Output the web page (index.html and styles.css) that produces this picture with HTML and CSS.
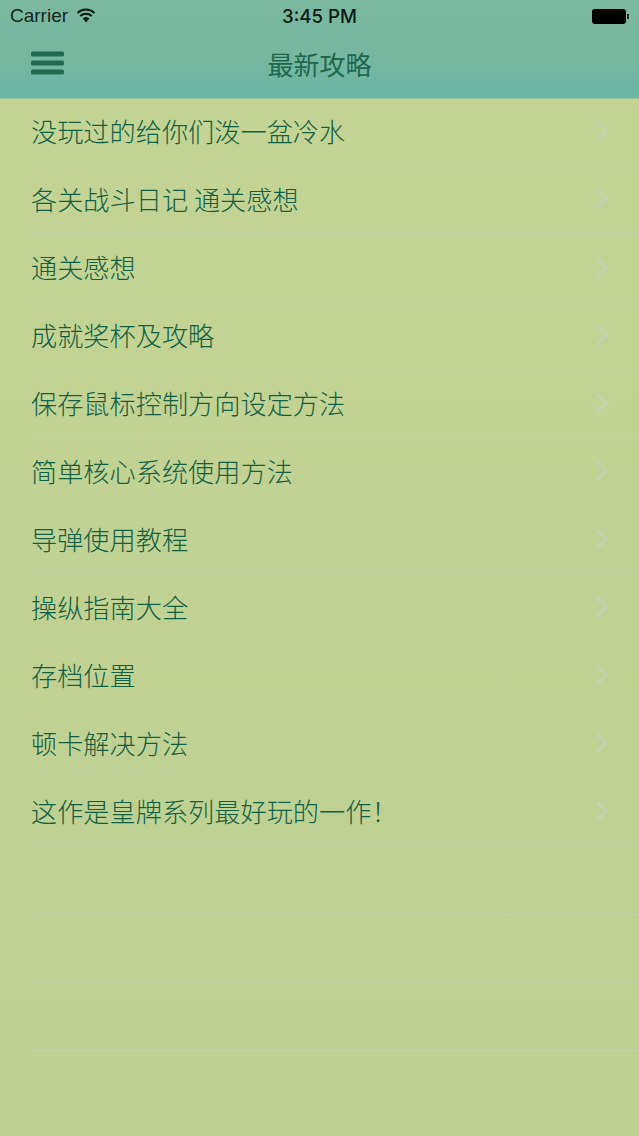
FILE: index.html
```html
<!DOCTYPE html>
<html lang="zh">
<head>
<meta charset="utf-8">
<title>最新攻略</title>
<link rel="stylesheet" href="styles.css">
</head>
<body>
<div class="app">
  <header class="top">
    <div class="status">
      <div class="status-left">
        <span>Carrier</span>
        <svg class="wifi" width="20" height="15" viewBox="0 0 20 15"><path d="M10 14.500 6.700 10.600a4.900 4.900 0 0 1 6.600 0Z" fill="#0a1a14"/><path d="M4.300 8a8.400 8.400 0 0 1 11.400 0M1.500 4.900a12.600 12.600 0 0 1 17 0" fill="none" stroke="#0a1a14" stroke-width="2"/></svg>
      </div>
      <div class="status-time">3:45 PM</div>
      <div class="status-right">
        <span class="battery"></span><span class="battery-tip"></span>
      </div>
    </div>
    <div class="nav">
      <svg class="menu" width="34" height="24" viewBox="0 0 34 24"><rect y="0.500" width="33" height="5" rx="1.500"/><rect y="9.500" width="33" height="5" rx="1.500"/><rect y="18.500" width="33" height="5" rx="1.500"/></svg>
      <h1 class="title">最新攻略</h1>
    </div>
  </header>
  <ul class="list">
    <li class="row"><span>没玩过的给你们泼一盆冷水</span><svg class="chev" width="14" height="22" viewBox="0 0 14 22"><path d="M2.500 2 11 11 2.500 20"/></svg></li>
    <li class="row row-marked"><span>各关战斗日记 通关感想</span><svg class="chev" width="14" height="22" viewBox="0 0 14 22"><path d="M2.500 2 11 11 2.500 20"/></svg></li>
    <li class="row"><span>通关感想</span><svg class="chev" width="14" height="22" viewBox="0 0 14 22"><path d="M2.500 2 11 11 2.500 20"/></svg></li>
    <li class="row"><span>成就奖杯及攻略</span><svg class="chev" width="14" height="22" viewBox="0 0 14 22"><path d="M2.500 2 11 11 2.500 20"/></svg></li>
    <li class="row"><span>保存鼠标控制方向设定方法</span><svg class="chev" width="14" height="22" viewBox="0 0 14 22"><path d="M2.500 2 11 11 2.500 20"/></svg></li>
    <li class="row"><span>简单核心系统使用方法</span><svg class="chev" width="14" height="22" viewBox="0 0 14 22"><path d="M2.500 2 11 11 2.500 20"/></svg></li>
    <li class="row"><span>导弹使用教程</span><svg class="chev" width="14" height="22" viewBox="0 0 14 22"><path d="M2.500 2 11 11 2.500 20"/></svg></li>
    <li class="row"><span>操纵指南大全</span><svg class="chev" width="14" height="22" viewBox="0 0 14 22"><path d="M2.500 2 11 11 2.500 20"/></svg></li>
    <li class="row"><span>存档位置</span><svg class="chev" width="14" height="22" viewBox="0 0 14 22"><path d="M2.500 2 11 11 2.500 20"/></svg></li>
    <li class="row"><span>顿卡解决方法</span><svg class="chev" width="14" height="22" viewBox="0 0 14 22"><path d="M2.500 2 11 11 2.500 20"/></svg></li>
    <li class="row"><span>这作是皇牌系列最好玩的一作！</span><svg class="chev" width="14" height="22" viewBox="0 0 14 22"><path d="M2.500 2 11 11 2.500 20"/></svg></li>
    <li class="row row-marked"></li>
    <li class="row row-marked"></li>
    <li class="row row-marked"></li>
  </ul>
</div>
</body>
</html>
```

FILE: styles.css
```css
* { box-sizing: border-box; }
html, body { margin: 0; padding: 0; }
body {
  width: 639px;
  height: 1136px;
  overflow: hidden;
  background: #bfd093;
  font-family: "Noto Sans CJK SC", "Liberation Sans", sans-serif;
}
.app { display: flex; flex-direction: column; height: 1136px; background: linear-gradient(180deg, #c3d494 0%, #bed092 100%); }
.top {
  height: 99px;
  flex: none;
  background: linear-gradient(180deg, #7ab89f 0%, #77b7a0 60%, #6bb5a5 100%);
  border-bottom: 1px solid #9cbf96;
}
.status {
  height: 32px;
  display: grid;
  grid-template-columns: 1fr auto 1fr;
  align-items: center;
  padding: 0 10px 0 10px;
  color: #0c1f18;
  font-family: "Liberation Sans", sans-serif;
}
.status-left { display: flex; align-items: center; gap: 8px; font-size: 19px; color: #14271f; }
.wifi { margin-top: -1px; }
.status-time { font-family: Inter, "Liberation Sans", sans-serif; font-size: 18.6px; font-weight: 500; color: #0a1a14; }
.status-right { display: flex; justify-content: flex-end; align-items: center; }
.battery { width: 34px; height: 15px; background: #000; border-radius: 3px; }
.battery-tip { width: 2px; height: 5px; background: #222; margin-left: 1px; }
.nav {
  position: relative;
  height: 66px;
  display: flex;
  align-items: center;
  justify-content: center;
}
.menu { position: absolute; left: 31px; top: 19px; fill: #226b52; }
.title { margin: 0 0 2px; font-size: 26px; font-weight: 400; line-height: 1; color: #1f684e; }
.list { list-style: none; margin: 0; padding: 0; }
.row {
  position: relative;
  height: 68px;
  display: flex;
  align-items: center;
  justify-content: space-between;
  padding: 0 30px 0 31px;
  font-size: 26.2px;
  line-height: 1;
  color: #135f44;
  font-weight: 300;
}
.row::after {
  content: "";
  position: absolute;
  left: 31px;
  right: 0;
  bottom: 0;
  height: 1px;
  background: #c2d39b;
}
.row-marked::after { background: #c5d2a6; }
.row > span { display: block; margin-top: -4px; }
.chev { flex: none; fill: none; stroke: #c6d1ae; stroke-width: 3.6; margin-top: -4px; }
```
